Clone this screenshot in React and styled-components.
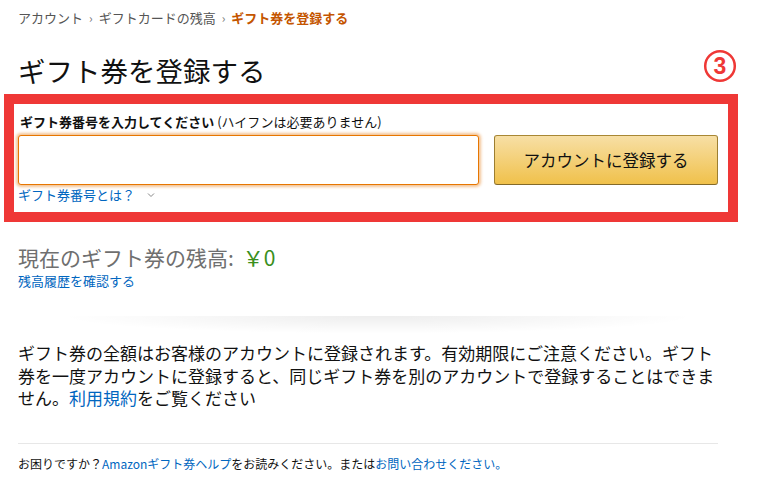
import React from "react";
import styled, { createGlobalStyle } from "styled-components";

const Global = createGlobalStyle`
  html, body { margin: 0; padding: 0; background: #fff; }
  body {
    font-family: "Noto Sans CJK JP", "Noto Sans", "Liberation Sans", sans-serif;
    color: #111;
  }
`;

const Page = styled.div`
  width: 700px;
  margin-left: 18px;
  padding-top: 10px;
  display: flex;
  flex-direction: column;
`;

const Crumbs = styled.nav`
  display: flex;
  align-items: center;
  gap: 6px;
  font-size: 13px;
  line-height: 16px;
  color: #555;
`;

const Crumb = styled.span`
  color: ${(p) => (p.$current ? "#c45500" : "#555")};
  font-weight: ${(p) => (p.$current ? 700 : 400)};
`;

const Sep = styled.span`
  color: #777;
  font-size: 12px;
`;

const TitleRow = styled.div`
  margin-top: 27px;
  display: flex;
  align-items: center;
  justify-content: space-between;
`;

const Title = styled.h1`
  margin: 0;
  font-size: 27.5px;
  font-weight: 400;
  line-height: 34px;
  color: #111;
`;

const Badge = styled.svg`
  width: 34px;
  height: 34px;
  margin-right: -19px;
  margin-top: -8px;
`;

const RedBox = styled.section`
  margin: 7px -20px 0 -14px;
  border: 10px solid #ef3836;
  padding: 10px 10px 9px 4px;
  display: flex;
  flex-direction: column;
`;

const Label = styled.div`
  font-size: 13px;
  line-height: 16px;
  padding-left: 2px;
  color: #111;
`;

const Strong = styled.span`
  font-weight: 700;
`;

const InputRow = styled.div`
  margin-top: 5px;
  display: flex;
  gap: 15px;
`;

const Input = styled.div`
  width: 461px;
  height: 50px;
  box-sizing: border-box;
  border: 1px solid #e77600;
  border-radius: 3px;
  box-shadow: 0 0 3px 2px rgba(228, 121, 17, 0.45);
  background: #fff;
`;

const Button = styled.button`
  width: 224px;
  height: 50px;
  box-sizing: border-box;
  border: 1px solid;
  border-color: #a88734 #9c7e31 #846a29;
  border-radius: 3px;
  background: linear-gradient(to bottom, #f7dfa5, #f0c14b);
  font-family: inherit;
  font-size: 16.5px;
  color: #111;
  padding: 0;
  cursor: pointer;
`;

const Link = styled.a`
  color: #0066c0;
  text-decoration: none;
`;

const HelpRow = styled.div`
  margin-top: 2px;
  font-size: 13px;
  line-height: 16px;
  display: flex;
  align-items: center;
  gap: 12px;
`;

const Chevron = styled.svg`
  width: 8px;
  height: 6px;
`;

const Balance = styled.div`
  margin-top: 21px;
  font-size: 21px;
  line-height: 28px;
  color: #6f6f6f;
  display: flex;
  gap: 9px;
`;

const Amount = styled.span`
  color: #3a8f1c;
`;

const HistoryRow = styled.div`
  margin-top: 2px;
  font-size: 13px;
  line-height: 16px;
`;

const ShadowDivider = styled.div`
  margin: 27px -20px 0 0;
  height: 22px;
  background: radial-gradient(ellipse 55% 100% at 50% 0%, rgba(0, 0, 0, 0.07), rgba(0, 0, 0, 0) 80%);
`;

const Paragraph = styled.p`
  margin: 4px 0 0;
  font-size: 17px;
  line-height: 22.5px;
  color: #111;
`;

const Rule = styled.hr`
  margin: 33px 0 0;
  border: 0;
  border-top: 1px solid #e7e7e7;
`;

const Footer = styled.div`
  margin-top: 12px;
  font-size: 12px;
  line-height: 16px;
  color: #111;
`;

export default function App() {
  return (
    <>
      <Global />
      <Page>
        <Crumbs>
          <Crumb>アカウント</Crumb>
          <Sep>›</Sep>
          <Crumb>ギフトカードの残高</Crumb>
          <Sep>›</Sep>
          <Crumb $current>ギフト券を登録する</Crumb>
        </Crumbs>
        <TitleRow>
          <Title>ギフト券を登録する</Title>
          <Badge viewBox="0 0 34 34">
            <circle cx="17" cy="17" r="14.8" fill="none" stroke="#ef3836" strokeWidth="2.5" />
            <text
              x="17"
              y="25"
              textAnchor="middle"
              fontSize="23"
              fontWeight="700"
              fill="#ef3836"
              fontFamily="Liberation Sans, sans-serif"
            >
              3
            </text>
          </Badge>
        </TitleRow>
        <RedBox>
          <Label>
            <Strong>ギフト券番号を入力してください</Strong> (ハイフンは必要ありません)
          </Label>
          <InputRow>
            <Input />
            <Button>アカウントに登録する</Button>
          </InputRow>
          <HelpRow>
            <Link>ギフト券番号とは？</Link>
            <Chevron viewBox="0 0 8 6">
              <path d="M1 1.5 L4 4.5 L7 1.5" fill="none" stroke="#888" strokeWidth="1" />
            </Chevron>
          </HelpRow>
        </RedBox>
        <Balance>
          <span>現在のギフト券の残高:</span>
          <Amount>￥0</Amount>
        </Balance>
        <HistoryRow>
          <Link>残高履歴を確認する</Link>
        </HistoryRow>
        <ShadowDivider />
        <Paragraph>
          {"ギフト券の全額はお客様のアカウントに登録されます。有効期限にご注意ください。ギフト券を一度アカウントに登録すると、同じギフト券を別のアカウントで登録することはできま"}
          {"せん。"}
          <Link>利用規約</Link>
          {"をご覧ください"}
        </Paragraph>
        <Rule />
        <Footer>
          お困りですか？<Link>Amazonギフト券ヘルプ</Link>をお読みください。または
          <Link>お問い合わせください。</Link>
        </Footer>
      </Page>
    </>
  );
}
